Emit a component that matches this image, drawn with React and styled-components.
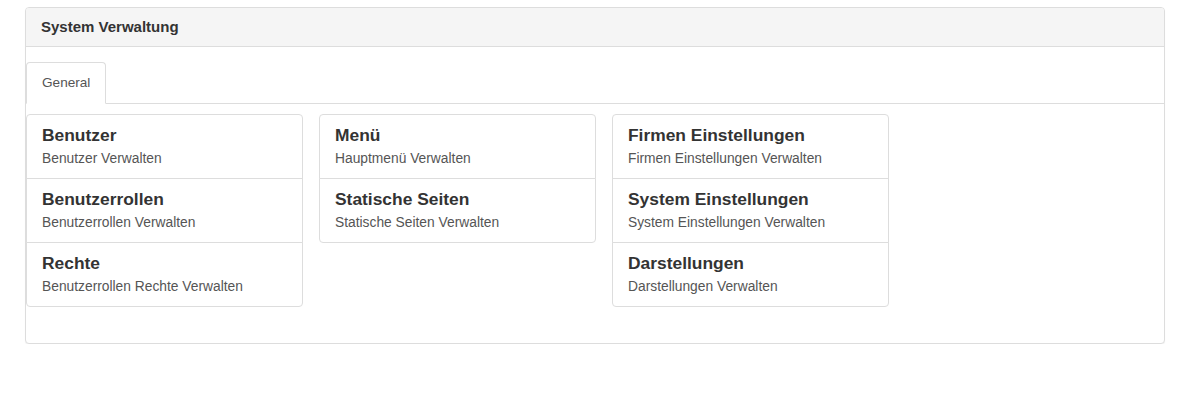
import React from "react";
import styled, { createGlobalStyle } from "styled-components";

const groups = [
  [
    { title: "Benutzer", text: "Benutzer Verwalten" },
    { title: "Benutzerrollen", text: "Benutzerrollen Verwalten" },
    { title: "Rechte", text: "Benutzerrollen Rechte Verwalten" },
  ],
  [
    { title: "Menü", text: "Hauptmenü Verwalten" },
    { title: "Statische Seiten", text: "Statische Seiten Verwalten" },
  ],
  [
    { title: "Firmen Einstellungen", text: "Firmen Einstellungen Verwalten" },
    { title: "System Einstellungen", text: "System Einstellungen Verwalten" },
    { title: "Darstellungen", text: "Darstellungen Verwalten" },
  ],
];

const Global = createGlobalStyle`
  body {
    margin: 0;
    background: #fff;
    font-family: "Liberation Sans", Arial, sans-serif;
    color: #333;
  }
`;

const App = () => {
  return (
    <Page>
      <Global />
      <Panel>
        <Heading>System Verwaltung</Heading>
        <Body>
          <Tabs>
            <Tab active>General</Tab>
          </Tabs>
          <Columns>
            {groups.map((group, i) => (
              <ListGroup key={i}>
                {group.map((item) => (
                  <Item key={item.title}>
                    <ItemTitle>{item.title}</ItemTitle>
                    <ItemText>{item.text}</ItemText>
                  </Item>
                ))}
              </ListGroup>
            ))}
          </Columns>
        </Body>
      </Panel>
    </Page>
  );
};

export default App;

const Page = styled.div`
  padding: 7px 23px 0 25px;
`;

const Panel = styled.div`
  width: 1140px;
  box-sizing: border-box;
  border: 1px solid #ddd;
  border-radius: 4px;
  background: #fff;
  box-shadow: 0 1px 1px rgba(0, 0, 0, 0.05);
`;

const Heading = styled.div`
  padding: 10px 15px;
  line-height: 18px;
  font-size: 15px;
  font-weight: 700;
  color: #333;
  background: #f5f5f5;
  border-bottom: 1px solid #ddd;
  border-radius: 3px 3px 0 0;
`;

const Body = styled.div`
  padding: 15px 0 36px;
`;

const Tabs = styled.div`
  display: flex;
  border-bottom: 1px solid #ddd;
`;

const Tab = styled.div`
  padding: 11px 15px 11px;
  font-size: 13.6px;
  line-height: 18px;
  color: #555;
  background: #fff;
  border: 1px solid ${(props) => (props.active ? "#ddd" : "transparent")};
  border-bottom-color: transparent;
  border-radius: 4px 4px 0 0;
  margin-bottom: -1px;
`;

const Columns = styled.div`
  display: flex;
  align-items: flex-start;
  gap: 16px;
  padding-top: 10px;
`;

const ListGroup = styled.div`
  width: 277px;
  display: flex;
  flex-direction: column;
`;

const Item = styled.div`
  padding: 10px 15px;
  border: 1px solid #ddd;
  margin-bottom: -1px;
  background: #fff;

  &:first-child {
    border-radius: 4px 4px 0 0;
  }
  &:last-child {
    margin-bottom: 0;
    border-radius: 0 0 4px 4px;
  }
`;

const ItemTitle = styled.div`
  font-size: 17.4px;
  font-weight: 700;
  line-height: 20px;
  color: #333;
  margin-bottom: 4px;
`;

const ItemText = styled.div`
  font-size: 13.8px;
  line-height: 19px;
  color: #555;
`;
